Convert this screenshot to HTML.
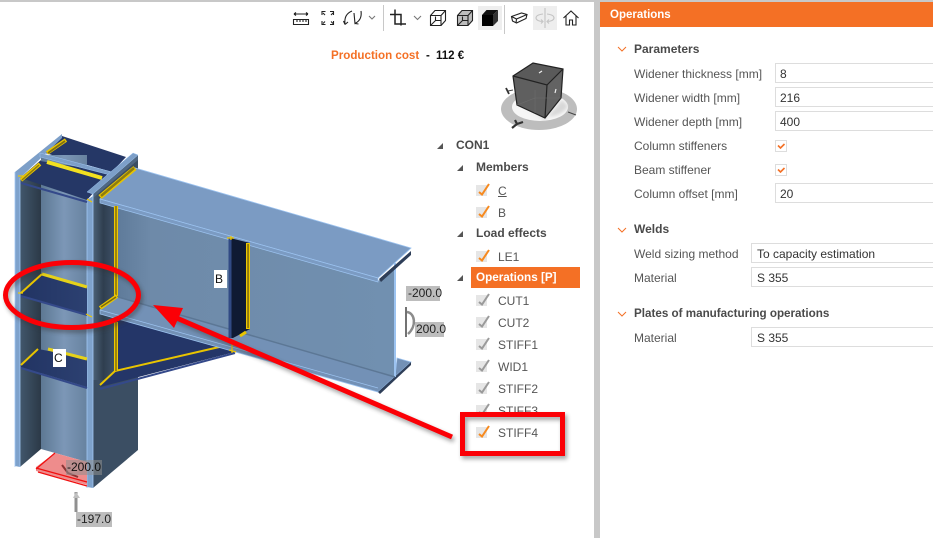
<!DOCTYPE html>
<html><head><meta charset="utf-8">
<style>
html,body{margin:0;padding:0;background:#fff}
#p{position:relative;width:933px;height:538px;overflow:hidden;background:#fff;font-family:"Liberation Sans",sans-serif;font-size:12px;color:#555}
.t{position:absolute;white-space:nowrap;line-height:16px}
.b{font-weight:bold;color:#4a4a4a}
.i{position:absolute;box-sizing:border-box;border:1px solid #ddd;border-right:0;right:-2px;height:20px;line-height:20px;padding-left:4px;color:#333;background:#fff}
svg{position:absolute;left:0;top:0}
</style></head><body><div id="p">

<svg width="933" height="538" viewBox="0 0 933 538">
<defs>
<linearGradient id="w" x1="0" x2="1" y1="0" y2="0"><stop offset="0" stop-color="#5d7893"/><stop offset=".5" stop-color="#7c97b7"/><stop offset="1" stop-color="#67829f"/></linearGradient>
<linearGradient id="d" x1="0" x2="1" y1="0" y2="0"><stop offset="0" stop-color="#42576c"/><stop offset="1" stop-color="#2b3947"/></linearGradient>
<linearGradient id="cs" x1="0" x2="1" y1="0" y2="0"><stop offset="0" stop-color="#4c6278"/><stop offset=".45" stop-color="#2f3e4f"/><stop offset="1" stop-color="#3f5369"/></linearGradient>
<linearGradient id="bwx" gradientUnits="userSpaceOnUse" x1="118" x2="395" y1="0" y2="0"><stop offset="0" stop-color="#5f7b9a"/><stop offset=".12" stop-color="#6e8aa9"/><stop offset="1" stop-color="#7190b0"/></linearGradient>
<linearGradient id="n" x1="0" x2="1" y1="0" y2="0"><stop offset="0" stop-color="#223463"/><stop offset="1" stop-color="#2c4071"/></linearGradient>
<filter id="s" x="-20%" y="-20%" width="140%" height="140%"><feGaussianBlur stdDeviation="2"/></filter>
<filter id="s1"><feGaussianBlur stdDeviation="1.500"/></filter>
<g id="cb"><rect x="0" y="0" width="11" height="11" fill="#e6e6e6"/></g>
</defs>

<!-- frame -->
<rect x="0" y="0" width="933" height="2" fill="#c8c8c8"/>
<rect x="594" y="0" width="6" height="538" fill="#c8c8c8"/>
<rect x="600" y="2" width="333" height="25" fill="#f47025"/>

<!-- toolbar -->
<g fill="none" stroke="#222" stroke-width="1.1">
<path d="M294 14H308M294 14l2-1.500M294 14l2 1.500M308 14l-2-1.500M308 14l-2 1.500"/>
<path d="M293.500 19.500h15v5h-15zM297 19.500v2.500M300 19.500v2.500M303 19.500v2.500M306 19.500v2.500"/>
<path d="M322 15v-3.500h3.500M330 11.500h3.500V15M325.500 24.500H322V21M333.500 21v3.500H330M323 13l2 2M333 13l-2 2M323 23.500l2-2M333 23.500l-2-2"/>
<path d="M352 11c-5 2-8 6-7 13.500M345 24.500l-1.500-3.500M345 24.500l3-2.500M354 13l1 10.500c4-2 7-6 6-12.500M355 23.500l3.500.5"/>
<path d="M369 16l3 3 3-3" stroke="#777"/>
<path d="M395 9.500v14.500h11M390 14.500h11v11" stroke-width="1.500"/>
<path d="M414 16l3.500 3.500L421 16" stroke="#777"/>
<path d="M430.500 15.500h10.500v10h-10.500zM430.500 15.500l4.500-5h10.500v10l-4.500 5M441 15.500l4.500-5M435.500 21v-4.500M431 25l4.500-4.500h5"/>
<path d="M457.500 15.500l4.500-5h10.500v10l-4.500 5h-10.500z" fill="#bdbdbd"/><path d="M457.500 15.500h10.500v10M468 15.500l4.500-5M462.500 21v-4.500M458 25l4.500-4.500h5"/>
<rect x="478" y="6" width="24" height="24" fill="#eee" stroke="none"/>
<path d="M482 15h11v11h-11z" fill="#000" stroke="none"/><path d="M482 15l4.500-5H498l-5 5z" fill="#111" stroke="none"/><path d="M493 15l5-5v11l-5 5z" fill="#333" stroke="none"/>
<path d="M511.500 16.500l10-3.500 5.500 1.500-1 4-9.500 4.500-4-2zM511.500 16.500l5 2.500 10.500-4.500M516.500 19l-.5 4"/>
<rect x="533" y="6" width="24" height="24" fill="#eee" stroke="none"/>
<path d="M545 8v20M543 14c-5 .5-7 2-7 4s3 3.500 7 3.500M547 14c5 .5 7 2 7 4s-3 3.500-7 3.500M541 19.500l2 2-2 2M549 19.500l-2 2 2 2" stroke="#c4c4c4"/>
<path d="M563.500 18l7.500-7 7.500 7M566 16v9h3.500v-5h3v5h3.500v-9"/>
</g>
<rect x="383" y="5" width="1" height="26" fill="#c8c8c8"/>
<rect x="504" y="5" width="1" height="29" fill="#c8c8c8"/>

<!-- nav cube -->
<ellipse cx="539" cy="109" rx="38" ry="21" fill="#bdbdbd"/>
<ellipse cx="540" cy="107" rx="28" ry="14" fill="#f6f6f6"/>
<path d="M520 108l25 12 17-20 6 6c-6 10-18 12-30 10z" fill="#d8d8d8" filter="url(#s1)"/>
<path d="M513 76L533 63 563 69 547 85z" fill="#5a5a5a"/>
<path d="M513 76L547 85 545 118 517 105z" fill="#5f5f5f"/>
<path d="M547 85L563 69 561 98 545 118z" fill="#636363"/>
<path d="M513 76L533 63 563 69 561 98 545 118 517 105zM513 76L547 85 563 69M547 85L545 118" stroke="#222" stroke-width="1.200" fill="none"/>
<path d="M535 90v23M517 105l18-7 26 0" stroke="#6d6d6d" stroke-width=".6" fill="none"/>
<path d="M539 73l3-2M555 93l1-4" stroke="#eee" stroke-width="1.200"/>
<path d="M508 91l5-1M568 112l8 3" stroke="#444" fill="none"/>
<path d="M506 88l3 6" stroke="#333" stroke-width="1.800"/>
<path d="M515 120l2 4-5 4M517 124l6-2" stroke="#333" stroke-width="2.200" fill="none"/>

<!-- column -->
<path d="M93 193L138 155V450L93 488z" fill="#3b4e63"/>
<path d="M93 193H116V380H93z" fill="url(#cs)"/>
<path d="M93 193L138 155V160L93 198z" fill="#4f6782"/>
<path d="M45 153L62 136 126 157 112 172z" fill="#253766"/>
<path d="M20 178L62 138V134L15 172z" fill="#7d9fc8"/>
<path d="M41 155H87V462L41 449z" fill="url(#w)"/>
<path d="M20 178L41 160V449L20 467z" fill="url(#d)"/>
<path d="M87 200L93 196V488L87 487z" fill="#7ea2cc"/>
<path d="M15 172H20V467L15 466z" fill="#7ea2cc"/>
<path d="M15 172V467M20 178V467M87 193V488M93 193V488" stroke="#a3c8f4" stroke-width=".8" fill="none"/>
<path d="M21 178L40 161 112 172 87 200z" fill="#253766"/>
<path d="M40 153L112 172 110 175 40 157z" fill="#7d9fc8" stroke="#9cc3f0" stroke-width=".5"/>
<path d="M21 183L87 202" stroke="#34498a" stroke-width="2"/>
<path d="M87 192L133 153 138 155 93 194z" fill="#7d9fc8" stroke="#9cc3f0" stroke-width=".5"/>
<path d="M21 180L40 164" stroke="#e8c400" stroke-width="4"/><path d="M22 180L39 165" stroke="#8a7a10" stroke-width="1.500"/>
<path d="M47 162L102 178" stroke="#f2e020" stroke-width="4"/>
<path d="M47 153L66 140" stroke="#e8c400" stroke-width="4"/><path d="M48 153L65 141" stroke="#7f7010" stroke-width="1.800"/>

<!-- stiffener mid -->
<path d="M21 293L42 273 87 287V315L21 297z" fill="url(#n)"/>
<path d="M21 296L87 315" stroke="#34498a" stroke-width="2"/>
<path d="M21 293L42 274" stroke="#e8c400" stroke-width="2"/>
<path d="M42 274L87 287" stroke="#e6d21a" stroke-width="3"/>
<!-- stiffener low -->
<path d="M21 365L38 349 87 358V387L21 367z" fill="url(#n)"/>
<path d="M21 368L87 388" stroke="#34498a" stroke-width="2"/>
<path d="M21 365L38 349" stroke="#e8c400" stroke-width="2"/>
<path d="M48 349L87 359" stroke="#e6d21a" stroke-width="3"/>

<!-- haunch -->
<path d="M100 387L115 370 118 300 236 345 235 352z" fill="#243668"/>
<path d="M100 389L235 353" stroke="#34498a" stroke-width="2"/>
<path d="M100 385L115 371 228 345" stroke="#e8c400" stroke-width="2" fill="none"/>
<path d="M116 322V371" stroke="#f0c800" stroke-width="4"/><path d="M116 322V371" stroke="#7b6a10" stroke-width="1.400"/>

<!-- beam -->
<path d="M100 310L118 297 395 377 397 358 411 362 378 392 100 314z" fill="#7391b6" stroke="#9cc3f0" stroke-width=".8"/>
<path d="M378 392L411 362 411 365 380 394z" fill="#2e3e58"/>
<path d="M118 206L378 281 395 266V377L118 297z" fill="url(#bwx)"/>
<path d="M395 263V377" stroke="#9cc3f0" stroke-width="2"/>
<path d="M118 297L395 377" stroke="#5c7795" stroke-width="1.500"/>
<path d="M100 310L378 388" stroke="#9cc3f0" stroke-width=".7"/>
<path d="M100 199L135 168 411 248 378 278z" fill="#7b9bc3" stroke="#9cc3f0" stroke-width=".8"/>
<path d="M100 199L378 278 378 282 100 203z" fill="#7b9bc3" stroke="#9cc3f0" stroke-width=".7"/>
<path d="M379 279L411 251V255L381 282z" fill="#2e3e58"/>
<path d="M100 197L135 168" stroke="#e8c400" stroke-width="5"/>
<path d="M101 196L134 168" stroke="#8d7c10" stroke-width="2.500"/>
<!-- vertical stiffeners -->
<path d="M116 206V296" stroke="#f0c800" stroke-width="4"/>
<path d="M116 206V296" stroke="#7b6a10" stroke-width="1.400"/>
<path d="M100 308L117 296" stroke="#e8c400" stroke-width="4"/><path d="M101 307L116 297" stroke="#7b6a10" stroke-width="1.500"/>
<path d="M230 238L250 243V329L233 338H230z" fill="#0f1a33"/>
<path d="M230 238V338" stroke="#314a84" stroke-width="3"/>
<path d="M246 243h4v86h-4z" fill="#f0c800"/><rect x="247.300" y="244" width="1.500" height="84" fill="#7b6a10"/>
<path d="M240 336l6-4" stroke="#e8c400" stroke-width="3"/>
<path d="M227 238h7M231 236v4M18 293h5M86 314l6 3M232 344v9M229 350l7 2M18 176h6M87 199l5 3" stroke="#f0c800" stroke-width="1.200" fill="none"/>

<!-- base plate -->
<path d="M36 467L55 453 87 462V485L36 471z" fill="#ee8c8c"/>
<path d="M36 469L55 453M36 468L87 482M38 472L87 486" stroke="#f01010" stroke-width="1.300" fill="none"/>
<path d="M62 465l6 8 10 4" stroke="#8a3535" stroke-width="2" fill="none"/>
<rect x="66" y="460" width="36" height="15" fill="#8f8f8f" fill-opacity=".55"/>
<path d="M76 512V492" stroke="#909090" stroke-width="3"/>
<path d="M73 498l3-6 4 6z" fill="#c0c0c0"/>
<rect x="76" y="512" width="36" height="15" fill="#bdbdbd"/>
<rect x="406" y="286" width="34" height="15" fill="#bdbdbd"/>
<rect x="415" y="322" width="29" height="15" fill="#bdbdbd"/>
<path d="M407 312c8 1 10 14 1 22" stroke="#8c8c8c" stroke-width="2.500" fill="none"/>
<path d="M406 307v30" stroke="#444" stroke-width="1.500"/>
<rect x="214" y="270" width="13" height="18" fill="#fff"/>
<rect x="53" y="349" width="13" height="18" fill="#fff"/>

<!-- tree -->
<g fill="#555">
<path d="M437 149h6v-6z"/><path d="M457 171h6v-6z"/><path d="M457 237h6v-6z"/><path d="M457 281h6v-6z"/>
</g>
<rect x="471" y="267" width="109" height="21" fill="#f47025"/>
<g>
<use href="#cb" x="476" y="185"/><use href="#cb" x="476" y="207"/><use href="#cb" x="476" y="251"/>
<use href="#cb" x="476" y="295"/><use href="#cb" x="476" y="317"/><use href="#cb" x="476" y="339"/><use href="#cb" x="476" y="361"/><use href="#cb" x="476" y="383"/><use href="#cb" x="476" y="405"/><use href="#cb" x="476" y="427"/>
</g>
<g fill="none" stroke-width="2">
<path stroke="#f78a1f" d="M479 192l3 2.500 7-10.500M479 214l3 2.500 7-10.500M479 258l3 2.500 7-10.500M479 434l3 2.500 7-10.500"/>
<path stroke="#9a9a9a" d="M479 302l3 2.500 7-10.500M479 324l3 2.500 7-10.500M479 346l3 2.500 7-10.500M479 368l3 2.500 7-10.500M479 390l3 2.500 7-10.500M479 412l3 2.500 7-10.500"/>
</g>

<!-- right panel chevrons -->
<g fill="none" stroke="#f47025" stroke-width="1">
<path d="M618 47l4 4 4-4M618 228l4 4 4-4M618 312l4 4 4-4"/>
</g>
</svg>

<!-- scene labels -->
<div class="t" style="left:215px;top:271px;color:#111">B</div>
<div class="t" style="left:54px;top:350px;color:#111">C</div>
<div class="t" style="left:67px;top:459px;color:#111">-200.0</div>
<div class="t" style="left:77px;top:511px;color:#222">-197.0</div>
<div class="t" style="left:408px;top:285px;color:#222">-200.0</div>
<div class="t" style="left:416px;top:321px;color:#222">200.0</div>

<!-- cost -->
<div class="t" style="left:331px;top:48px;color:#f47025;font-weight:bold;font-size:11.600px">Production cost</div>
<div class="t" style="left:426px;top:48px;color:#111;font-weight:bold;font-size:11.500px">-</div>
<div class="t" style="left:436px;top:48px;color:#111;font-weight:bold;font-size:11.500px">112 €</div>

<!-- tree labels -->
<div class="t b" style="left:456px;top:137px">CON1</div>
<div class="t b" style="left:476px;top:159px">Members</div>
<div class="t" style="left:498px;top:183px;text-decoration:underline">C</div>
<div class="t" style="left:498px;top:205px">B</div>
<div class="t b" style="left:476px;top:225px">Load effects</div>
<div class="t" style="left:498px;top:249px">LE1</div>
<div class="t" style="left:476px;top:270px;color:#fff;font-weight:bold;font-size:11.700px">Operations [P]</div>
<div class="t" style="left:498px;top:293px">CUT1</div>
<div class="t" style="left:498px;top:315px">CUT2</div>
<div class="t" style="left:498px;top:337px">STIFF1</div>
<div class="t" style="left:498px;top:359px">WID1</div>
<div class="t" style="left:498px;top:381px">STIFF2</div>
<div class="t" style="left:498px;top:403px;height:9px;overflow:hidden">STIFF3</div>
<div class="t" style="left:498px;top:425px">STIFF4</div>

<!-- red annotations -->
<svg width="933" height="538" viewBox="0 0 933 538">
<g filter="url(#s)" opacity=".45" transform="translate(2 3)" fill="none" stroke="#333" stroke-width="5">
<ellipse cx="72" cy="295" rx="66.500" ry="32.500"/>
<path d="M452 437L172 316"/>
<rect x="462.500" y="414.500" width="100" height="39"/>
</g>
<ellipse cx="72" cy="295" rx="66.500" ry="32.500" fill="none" stroke="#fb0006" stroke-width="5"/>
<path d="M452 437L172 316" stroke="#fb0006" stroke-width="5" fill="none"/>
<path d="M153 305L183 308 174 328z" fill="#fb0006"/>
<rect x="462.500" y="414.500" width="100" height="39" fill="none" stroke="#fb0006" stroke-width="5"/>
</svg>

<!-- right panel -->
<div class="t" style="left:610px;top:7px;color:#fff;font-weight:bold;font-size:11.500px">Operations</div>
<div class="t b" style="left:634px;top:41px">Parameters</div>
<div class="t" style="left:634px;top:66px">Widener thickness [mm]</div>
<div class="i" style="left:775px;top:63px">8</div>
<div class="t" style="left:634px;top:90px">Widener width [mm]</div>
<div class="i" style="left:775px;top:87px">216</div>
<div class="t" style="left:634px;top:114px">Widener depth [mm]</div>
<div class="i" style="left:775px;top:111px">400</div>
<div class="t" style="left:634px;top:138px">Column stiffeners</div>
<div class="t" style="left:634px;top:162px">Beam stiffener</div>
<div class="t" style="left:634px;top:186px">Column offset [mm]</div>
<div class="i" style="left:775px;top:183px">20</div>
<div class="t b" style="left:634px;top:221px">Welds</div>
<div class="t" style="left:634px;top:246px">Weld sizing method</div>
<div class="i" style="left:751px;top:243px;padding-left:5px">To capacity estimation</div>
<div class="t" style="left:634px;top:270px">Material</div>
<div class="i" style="left:751px;top:267px;padding-left:5px">S 355</div>
<div class="t b" style="left:634px;top:306px;font-size:11.650px">Plates of manufacturing operations</div>
<div class="t" style="left:634px;top:330px">Material</div>
<div class="i" style="left:751px;top:327px;padding-left:5px">S 355</div>

<svg width="933" height="538" viewBox="0 0 933 538" style="pointer-events:none">
<rect x="775.500" y="140.500" width="11" height="11" fill="#fff" stroke="#ddd"/>
<rect x="775.500" y="164.500" width="11" height="11" fill="#fff" stroke="#ddd"/>
<path d="M778 145.500l2.500 2.500 4-4M778 169.500l2.500 2.500 4-4" stroke="#f47025" stroke-width="1.600" fill="none"/>
</svg>
</div></body></html>
